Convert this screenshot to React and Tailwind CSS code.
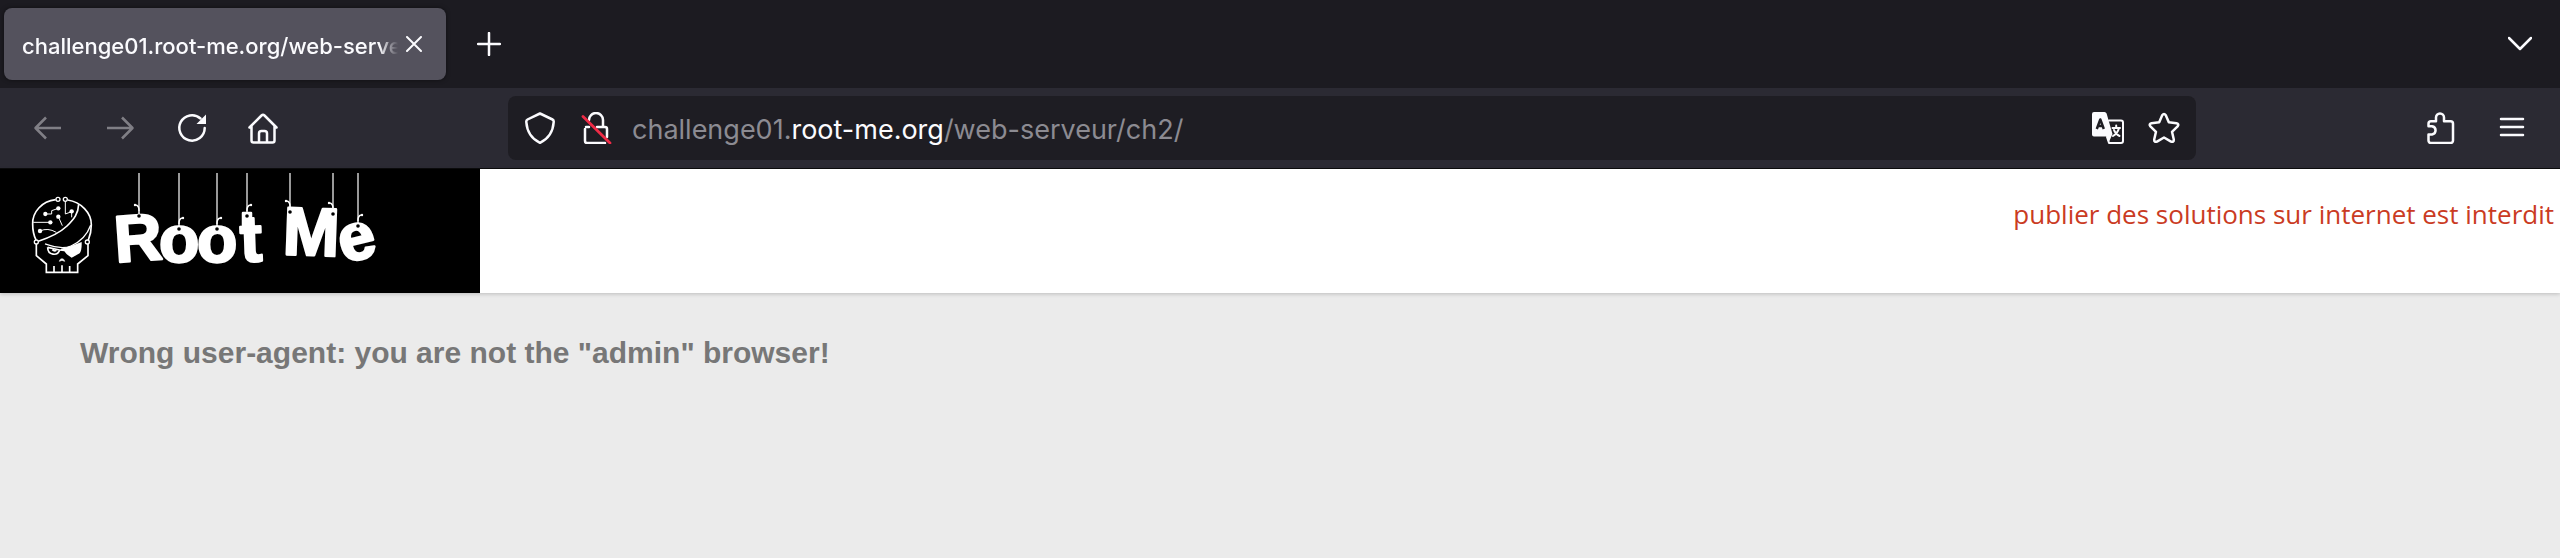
const LETTERS = [
  { ch: "R", x: 114, y: 261, size: 66, rot: -4 },
  { ch: "o", x: 159, y: 262, size: 66, rot: 0 },
  { ch: "o", x: 197, y: 262, size: 66, rot: 0 },
  { ch: "t", x: 240, y: 261, size: 66, rot: -2 },
  { ch: "M", x: 283, y: 255, size: 68, rot: 2 },
  { ch: "e", x: 337, y: 259, size: 66, rot: -14 },
];

const STRINGS = [
  { x: 139, y: 216, side: -1 },
  { x: 179, y: 229, side: 1 },
  { x: 217, y: 229, side: 1 },
  { x: 247, y: 216, side: 1 },
  { x: 290, y: 212, side: -1 },
  { x: 333, y: 214, side: -1 },
  { x: 358, y: 226, side: 1 },
];

function Icon({ size = 32, className = "", children }) {
  return (
    <svg
      width={size}
      height={size}
      viewBox={`0 0 ${size} ${size}`}
      fill="none"
      stroke="currentColor"
      strokeWidth="2.5"
      strokeLinecap="round"
      strokeLinejoin="round"
      className={`shrink-0 ${className}`}
      aria-hidden="true"
    >
      {children}
    </svg>
  );
}

function ToolButton({ label, disabled, children }) {
  return (
    <button
      type="button"
      aria-label={label}
      disabled={disabled}
      className="flex h-16 w-18 shrink-0 items-center justify-center rounded-lg text-[#fbfbfe] disabled:text-[#807f86]"
    >
      {children}
    </button>
  );
}

function TabStrip() {
  return (
    <div className="flex h-22 items-center bg-[#1c1b21] pr-2 pl-1 text-[#fbfbfe]">
      <div className="flex h-18 w-[442px] items-center rounded-lg bg-[#54525d] pl-[18px] shadow-[0_0_4px_rgba(0,0,0,0.5)]">
        <button
          type="button"
          className="w-[376px] overflow-hidden mask-r-from-95% pt-[3px] text-left font-[Inter,sans-serif] text-[22px] leading-8 font-medium whitespace-nowrap"
        >
          challenge01.root-me.org/web-serveur/ch2/
        </button>
        <button type="button" aria-label="Close tab" className="flex size-8 items-center justify-center">
          <Icon size={16}>
            <path d="M1 1 15 15M15 1 1 15" strokeWidth="2" />
          </Icon>
        </button>
      </div>
      <button type="button" aria-label="New tab" className="ml-[7px] flex h-18 w-18 items-center justify-center">
        <Icon size={24}>
          <path d="M12 1V23M1 12H23" />
        </Icon>
      </button>
      <button type="button" aria-label="List all tabs" className="ml-auto flex h-18 w-16 items-center justify-center">
        <Icon size={24}>
          <path d="M1 6 12 17 23 6" />
        </Icon>
      </button>
    </div>
  );
}

function AddressBar() {
  return (
    <div className="flex h-16 min-w-0 flex-1 items-center rounded-lg bg-[#1e1d23] pr-4 pl-4 text-[#fbfbfe]">
      <button type="button" aria-label="Tracking protection">
        <Icon>
          <path d="M16 1.5 28.5 7.5C29.5 8 29.8 9 29.7 10 29 20 24 27 16 30.8 8 27 3 20 2.3 10 2.2 9 2.5 8 3.5 7.5Z" />
        </Icon>
      </button>
      <button type="button" aria-label="Connection not secure" className="ml-6">
        <Icon>
          <path d="M9 8A7 7 0 0 1 23 8V15M5 17V29A2 2 0 0 0 7 31H25M6 15H9M17 15H25A2 2 0 0 1 27 17V25" />
          <path d="M3 4.500 30 31" stroke="#ee2b46" strokeWidth="2.800" />
        </Icon>
      </button>
      <label
        htmlFor="address"
        className="ml-5 pt-[3px] font-[Inter,sans-serif] text-[27px] leading-8 whitespace-nowrap text-[#8c8b92]"
      >
        challenge01.<span className="text-[#fbfbfe]">root-me.org</span>/web-serveur/ch2/
      </label>
      <input id="address" type="text" className="h-12 min-w-0 flex-1 bg-transparent outline-none" />
      <button type="button" aria-label="Translate page">
        <Icon>
          <path d="M17 8.5H29A2 2 0 0 1 31 10.5V29A2 2 0 0 1 29 31H17L15 25" strokeWidth="2" />
          <path
            d="M2 0H12.5Q14 0 14.6 1.6L20.5 22 16.5 31 14.8 24.5H2A2 2 0 0 1 0 22.5V2A2 2 0 0 1 2 0Z"
            fill="currentColor"
            stroke="none"
          />
          <path d="M4.8 17 8.3 7.5 11.8 17M6 14H10.6" stroke="#1e1d23" strokeLinecap="butt" />
          <path d="M20.5 16H28M24.200 13.500V16M27 16C26 20 23.500 22.500 21 24M22 18C23 21 25 23 27.500 24" strokeWidth="2" />
        </Icon>
      </button>
      <button type="button" aria-label="Bookmark this page" className="ml-6">
        <Icon>
          <path d="M14.2 3.2Q16 .8 17.8 3.2L20.8 10.2 28.5 11.2Q31.5 12 29.6 14.4L24 19.800 25.800 27.500Q26 30.600 23 29.600L16 25.500 9 29.600Q6 30.600 6.200 27.500L8 19.800 2.400 14.400Q.5 12 3.500 11.200L11.200 10.200Z" />
        </Icon>
      </button>
    </div>
  );
}

function Toolbar() {
  return (
    <div className="flex h-[81px] items-center border-b border-[#0c0c0d] bg-[#2b2a33] px-3">
      <ToolButton label="Back" disabled>
        <Icon>
          <path d="M29 16H4M14 5.5 3.5 16 14 26.5" strokeLinecap="butt" />
        </Icon>
      </ToolButton>
      <ToolButton label="Forward" disabled>
        <Icon>
          <path d="M3 16H28M18 5.5 28.5 16 18 26.5" strokeLinecap="butt" />
        </Icon>
      </ToolButton>
      <ToolButton label="Reload">
        <Icon>
          <path d="M28.7 16A12.7 12.7 0 1 1 24.5 6.5" />
          <path d="M30 2.500V12H20.500Z" fill="currentColor" stroke="none" />
        </Icon>
      </ToolButton>
      <ToolButton label="Home">
        <Icon>
          <path d="M1.500 15.500 13.500 3.500Q15 2 16.500 3.500L28.500 15.500M3.500 14V28.500A2 2 0 0 0 5.500 30.500H24.500A2 2 0 0 0 26.500 28.500V14M11 30V21.500A2.500 2.500 0 0 1 13.500 19H16.500A2.500 2.500 0 0 1 19 21.500V30" />
        </Icon>
      </ToolButton>
      <div className="w-52 shrink" />
      <AddressBar />
      <div className="w-52 shrink" />
      <ToolButton label="Extensions">
        <Icon>
          <path d="M12 9.300V5.500A4 4 0 0 1 20 5.500V9.300H26.500A2.500 2.500 0 0 1 29 11.800V28.500A2.500 2.500 0 0 1 26.500 31H7A2.500 2.500 0 0 1 4.500 28.500V22.500H8A4.200 4.200 0 0 0 8 14.200H4.500V11.800A2.500 2.500 0 0 1 7 9.300Z" />
        </Icon>
      </ToolButton>
      <ToolButton label="Open application menu">
        <Icon>
          <path d="M5 7H27M5 15H27M5 23H27" />
        </Icon>
      </ToolButton>
    </div>
  );
}

function Skull() {
  return (
    <g transform="translate(25 190) scale(.3333)" fill="none" stroke="#fff" strokeWidth="5">
      <path d="M92 29C50 34 22 66 23 102 23 122 27 138 33 150M128 30C168 36 199 68 199 104 199 124 195 138 190 150" />
      <path d="M40 154C75 142 105 128 126 108 148 87 160 70 161 43" />
      <path d="M197 106C186 136 166 156 138 168 114 178 88 172 60 162" strokeWidth="4" />
      <path d="M34 162V197L64 222V247H158V222L189 197V162M87 247V228M111 247V226M134 247V228" />
      <circle cx="99" cy="28" r="6" strokeWidth="4" />
      <circle cx="121" cy="28" r="6" strokeWidth="4" />
      <circle cx="34" cy="156" r="6" strokeWidth="4" />
      <circle cx="187" cy="156" r="6" strokeWidth="4" />
      <path d="M61 72H80V62L100 55M100 80 112 107M121 34V72L140 65M140 66V82M25 97H76M45 123Q68 112 94 127" strokeWidth="3" />
      <g fill="#fff" stroke="none">
        <circle cx="61" cy="72" r="6.5" />
        <circle cx="100" cy="55" r="6.5" />
        <circle cx="100" cy="80" r="6.5" />
        <circle cx="140" cy="64" r="6.5" />
        <circle cx="76" cy="97" r="6.5" />
        <circle cx="45" cy="123" r="6.5" />
        <path d="M108 176 138 168 170 156Q171 180 164 190L140 203Q124 194 118 184L104 182Z" />
      </g>
      <path d="M68 172C68 197 98 199 104 180L68 172M82 179Q88 185 94 181" />
      <path d="M103 214Q105 206 111 206T119 214L111 211Z" fill="#fff" strokeWidth="2" />
    </g>
  );
}

function Logo() {
  return (
    <svg viewBox="0 169 480 124" className="w-[480px] shrink-0 bg-black" role="img" aria-label="Root Me">
      <Skull />
      <g
        fill="#fff"
        stroke="#fff"
        strokeWidth="2.5"
        strokeLinejoin="round"
        fontFamily="Liberation Sans, Arial, sans-serif"
        fontWeight="700"
      >
        {LETTERS.map((l) => (
          <text key={l.x} x={l.x} y={l.y} fontSize={l.size} transform={`rotate(${l.rot} ${l.x + 20} ${l.y - 24})`}>
            {l.ch}
          </text>
        ))}
        <rect x="243" y="213" width="8" height="13" />
      </g>
      {STRINGS.map((s) => (
        <g key={s.x} fill="none" stroke="#fff">
          <path d={`M${s.x} 173V${s.y - 5}`} stroke="#ccc" strokeWidth="1.5" />
          <path d={`M${s.x} ${s.y - 2}V${s.y - 6}Q${s.x} ${s.y - 10} ${s.x + 3 * s.side} ${s.y - 11}`} strokeWidth="1.5" />
          <circle cx={s.x + 4 * s.side} cy={s.y - 11} r="1.2" fill="#fff" stroke="none" />
          <circle cx={s.x} cy={s.y} r="1.8" fill="#000" stroke="none" />
        </g>
      ))}
    </svg>
  );
}

export default function App() {
  return (
    <div className="min-h-screen bg-[#ebebeb]">
      <TabStrip />
      <Toolbar />
      <header className="flex items-start justify-between bg-white shadow-[0_1px_4px_rgba(0,0,0,0.2)]">
        <Logo />
        <p className="pt-[27px] pr-[6px] font-[Open_Sans,sans-serif] text-[26px] leading-9 text-[#ca3b23]">
          publier des solutions sur internet est interdit
        </p>
      </header>
      <main className="px-20 pt-10">
        <h1 className="font-[Liberation_Sans,Arial,sans-serif] text-[30px] leading-10 font-bold text-[#777]">
          Wrong user-agent: you are not the "admin" browser!
        </h1>
      </main>
    </div>
  );
}
